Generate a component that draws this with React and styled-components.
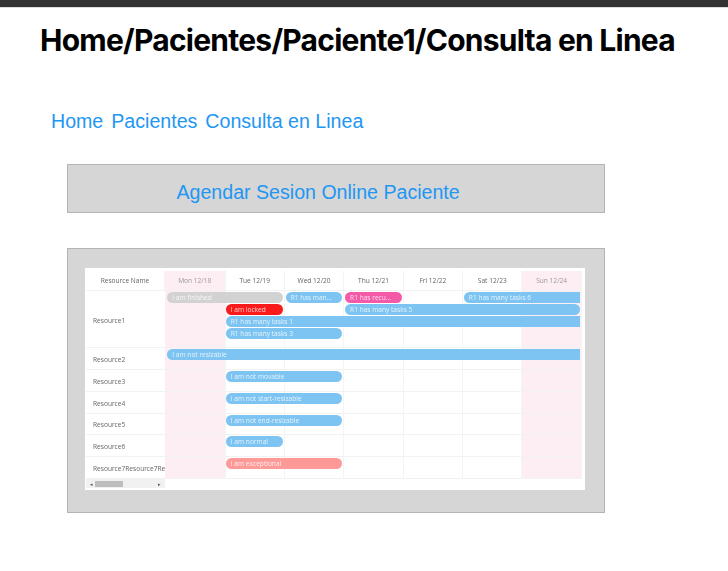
import React from 'react'
import styled, { createGlobalStyle } from 'styled-components'

const days = [
  { label: 'Mon 12/18', weekend: true },
  { label: 'Tue 12/19' },
  { label: 'Wed 12/20' },
  { label: 'Thu 12/21' },
  { label: 'Fri 12/22' },
  { label: 'Sat 12/23' },
  { label: 'Sun 12/24', weekend: true },
]

const colours = {
  blue: '#7dc4f2',
  grey: '#d2d2d2',
  red: '#fb1a1a',
  pink: '#f55aa8',
  salmon: '#fd9a98',
}

// start/end are 1-based day columns, lane is the stacked row inside a resource
const resources = [
  {
    name: 'Resource1',
    height: 57.3,
    lanes: 4,
    events: [
      { text: 'I am finished', start: 1, end: 2, lane: 1, colour: 'grey', inset: 2.3 },
      { text: 'R1 has man...', start: 3, end: 3, lane: 1, colour: 'blue' },
      { text: 'R1 has recu...', start: 4, end: 4, lane: 1, colour: 'pink' },
      { text: 'R1 has many tasks 6', start: 6, end: 7, lane: 1, colour: 'blue', flatEnd: true },
      { text: 'I am locked', start: 2, end: 2, lane: 2, colour: 'red', inset: 0.3 },
      { text: 'R1 has many tasks 5', start: 4, end: 7, lane: 2, colour: 'blue' },
      { text: 'R1 has many tasks 1', start: 2, end: 7, lane: 3, colour: 'blue', inset: 0.3, flatEnd: true },
      { text: 'R1 has many tasks 3', start: 2, end: 3, lane: 4, colour: 'blue', inset: 0.3 },
    ],
  },
  {
    name: 'Resource2',
    height: 21.7,
    lanes: 1,
    events: [{ text: 'I am not resizable', start: 1, end: 7, lane: 1, colour: 'blue', inset: 2.3, flatEnd: true }],
  },
  {
    name: 'Resource3',
    height: 22,
    lanes: 1,
    events: [{ text: 'I am not movable', start: 2, end: 3, lane: 1, colour: 'blue', inset: 0.3 }],
  },
  {
    name: 'Resource4',
    height: 21.6,
    lanes: 1,
    events: [{ text: 'I am not start-resizable', start: 2, end: 3, lane: 1, colour: 'blue', inset: 0.3 }],
  },
  {
    name: 'Resource5',
    height: 21.8,
    lanes: 1,
    events: [{ text: 'I am not end-resizable', start: 2, end: 3, lane: 1, colour: 'blue', inset: 0.3 }],
  },
  {
    name: 'Resource6',
    height: 22,
    lanes: 1,
    events: [{ text: 'I am normal', start: 2, end: 2, lane: 1, colour: 'blue', inset: 0.3 }],
  },
  {
    name: 'Resource7Resource7Resource7',
    height: 22,
    lanes: 1,
    events: [{ text: 'I am exceptional', start: 2, end: 3, lane: 1, colour: 'salmon', inset: 0.3 }],
  },
]

export default function App() {
  return (
    <>
      <GlobalStyle />
      <TopBar />
      <Title>Home/Pacientes/Paciente1/Consulta en Linea</Title>
      <Nav>
        <NavLink>Home</NavLink>
        <NavLink>Pacientes</NavLink>
        <NavLink>Consulta en Linea</NavLink>
      </Nav>
      <BookingBox>
        <BookingLink>Agendar Sesion Online Paciente</BookingLink>
      </BookingBox>
      <SchedulerPanel>
        <Scheduler>
          <Table>
            <HeaderRow>
              <HeaderCell>Resource Name</HeaderCell>
              {days.map((day) => (
                <HeaderCell key={day.label} $weekend={day.weekend}>
                  {day.label}
                </HeaderCell>
              ))}
            </HeaderRow>
            {resources.map((resource) => (
              <ResourceRow key={resource.name} $height={resource.height} $lanes={resource.lanes}>
                <ResourceName>{resource.name}</ResourceName>
                {days.map((day, i) => (
                  <DayCell key={day.label} $column={i + 2} $weekend={day.weekend} />
                ))}
                {resource.events.map((event) => (
                  <Event
                    key={event.text}
                    $start={event.start + 1}
                    $end={event.end + 2}
                    $lane={event.lane}
                    $colour={colours[event.colour]}
                    $inset={event.inset ?? 0.8}
                    $flatEnd={event.flatEnd}
                  >
                    {event.text}
                  </Event>
                ))}
              </ResourceRow>
            ))}
            <ScrollRow>
              <ScrollTrack>
                <ScrollArrow>◂</ScrollArrow>
                <ScrollThumb />
                <ScrollArrow>▸</ScrollArrow>
              </ScrollTrack>
            </ScrollRow>
          </Table>
        </Scheduler>
      </SchedulerPanel>
    </>
  )
}

const GlobalStyle = createGlobalStyle`
  html, body {
    margin: 0;
    background: #fff;
  }
  * {
    box-sizing: border-box;
  }
`

const TopBar = styled.div`
  height: 8px;
  background: #333;
  border-bottom: 1px solid #ddd;
`

const Title = styled.h1`
  margin: 14px 0 0 40px;
  font: 700 30px/36px Inter, "Liberation Sans", sans-serif;
  letter-spacing: -0.75px;
  color: #000;
  white-space: nowrap;
`

const Nav = styled.nav`
  display: flex;
  gap: 8px;
  margin: 50px 0 0 51px;
`

const NavLink = styled.a`
  font: 400 19.6px/26px "Liberation Sans", Arial, sans-serif;
  color: #2196f3;
`

const BookingBox = styled.div`
  width: 538px;
  height: 49px;
  margin: 30px 0 0 67px;
  padding: 7px 0 0 108.5px;
  display: flex;
  align-items: center;
  background: #d6d6d6;
  border: 1px solid #b4b4b4;
`

const BookingLink = styled.a`
  font: 400 19.6px/26px "Liberation Sans", Arial, sans-serif;
  color: #2196f3;
`

const SchedulerPanel = styled.div`
  width: 538px;
  height: 265px;
  margin: 35px 0 0 67px;
  padding: 19px 19px 0 17px;
  background: #d6d6d6;
  border: 1px solid #b4b4b4;
`

const Scheduler = styled.div`
  width: 500px;
  height: 222px;
  padding: 3px 3px 0 1px;
  background: #fff;
  filter: blur(0.6px);
`

const Table = styled.div`
  font-family: "Open Sans", "Liberation Sans", sans-serif;
  font-size: 6.6px;
`

const columns = '79px 60.5px repeat(6, 59.4px)'

const HeaderRow = styled.div`
  display: grid;
  grid-template-columns: ${columns};
  height: 20px;
`

const HeaderCell = styled.div`
  display: flex;
  align-items: center;
  justify-content: center;
  background: ${(p) => (p.$weekend ? '#fdeef3' : '#fff')};
  color: ${(p) => (p.$weekend ? '#999' : '#666')};
  border-right: 1px solid #f4f4f4;
  border-bottom: 1px solid #f2f2f2;
`

const ResourceRow = styled.div`
  display: grid;
  grid-template-columns: ${columns};
  grid-template-rows: repeat(${(p) => p.$lanes}, 12px) 1fr;
  height: ${(p) => p.$height}px;
`

const ResourceName = styled.div`
  grid-column: 1;
  grid-row: 1 / -1;
  display: flex;
  align-items: center;
  padding: 2px 0 0 7px;
  overflow: hidden;
  white-space: nowrap;
  color: #666;
  border-bottom: 1px solid #f2f2f2;
`

const DayCell = styled.div`
  grid-column: ${(p) => p.$column};
  grid-row: 1 / -1;
  background: ${(p) => (p.$weekend ? '#fdeef3' : '#fff')};
  border-right: 1px solid #f4f4f4;
  border-bottom: 1px solid #f2f2f2;
`

const Event = styled.div`
  grid-column: ${(p) => p.$start} / ${(p) => p.$end};
  grid-row: ${(p) => p.$lane};
  z-index: 1;
  height: 11px;
  margin: 1px 2px 0 ${(p) => p.$inset}px;
  padding-left: 5px;
  line-height: 11.5px;
  color: rgba(255, 255, 255, 0.8);
  white-space: nowrap;
  overflow: hidden;
  background: ${(p) => p.$colour};
  border-radius: ${(p) => (p.$flatEnd ? '5.5px 0 0 5.5px' : '5.5px')};
`

const ScrollRow = styled.div`
  display: flex;
  height: 9px;
`

const ScrollTrack = styled.div`
  width: 79px;
  display: flex;
  align-items: center;
  justify-content: space-between;
  padding: 0 4px;
  background: #f1f1f1;
`

const ScrollThumb = styled.div`
  width: 28px;
  height: 6px;
  margin-right: 33px;
  background: #bdbdbd;
`

const ScrollArrow = styled.span`
  font-size: 5px;
  line-height: 6px;
  color: #555;
`
